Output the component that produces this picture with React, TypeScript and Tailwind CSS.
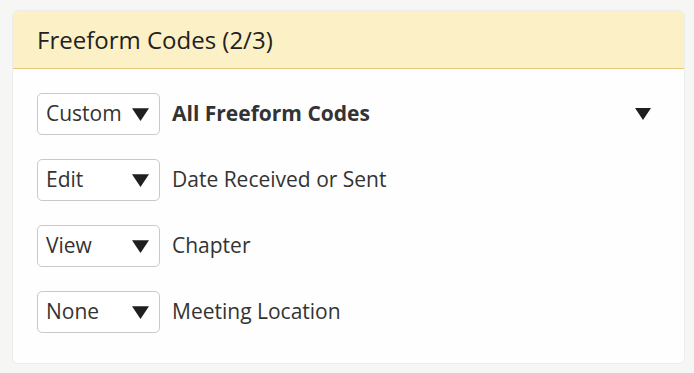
const rows = [
  { mode: 'Custom', label: 'All Freeform Codes', bold: true },
  { mode: 'Edit', label: 'Date Received or Sent' },
  { mode: 'View', label: 'Chapter' },
  { mode: 'None', label: 'Meeting Location' },
]

function Caret({ className = '' }: { className?: string }) {
  return (
    <svg viewBox="0 0 16 12" className={className} fill="currentColor">
      <path d="M0 0h16L8 12z" />
    </svg>
  )
}

export default function App() {
  return (
    <div className="min-h-screen bg-[#f6f6f5] pt-[10px] pl-[12px] pr-[9px] font-['Open_Sans',sans-serif] text-[#2b2b2b]">
      <div className="h-[354px] rounded-md border border-[#ececec] bg-[#fefefe] overflow-hidden">
        {/* Header */}
        <div className="h-[58px] bg-[#fcf0c6] border-b border-[#e6c978] px-6 flex items-center">
          <h2 className="text-[24px] font-medium leading-none text-[#222]">Freeform Codes (2/3)</h2>
        </div>

        {/* Rows */}
        <div className="pt-6 pl-6 pr-[33px] flex flex-col gap-6">
          {rows.map((r) => (
            <div key={r.label} className="flex items-center h-[42px]">
              <div className="w-[123px] h-[42px] shrink-0 rounded-[5px] border border-[#c9c9c9] bg-white flex items-center justify-between pl-2 pr-[10px]">
                <span className="text-[21px] text-[#333]">{r.mode}</span>
                <Caret className="w-[17px] h-[13px] text-[#1f1f1f]" />
              </div>
              <span
                className={
                  'ml-3 text-[21px] text-[#333] ' + (r.bold ? 'font-bold' : '')
                }
              >
                {r.label}
              </span>
              {r.bold && <Caret className="ml-auto w-[16px] h-[12px] text-[#1f1f1f]" />}
            </div>
          ))}
        </div>
      </div>
    </div>
  )
}
